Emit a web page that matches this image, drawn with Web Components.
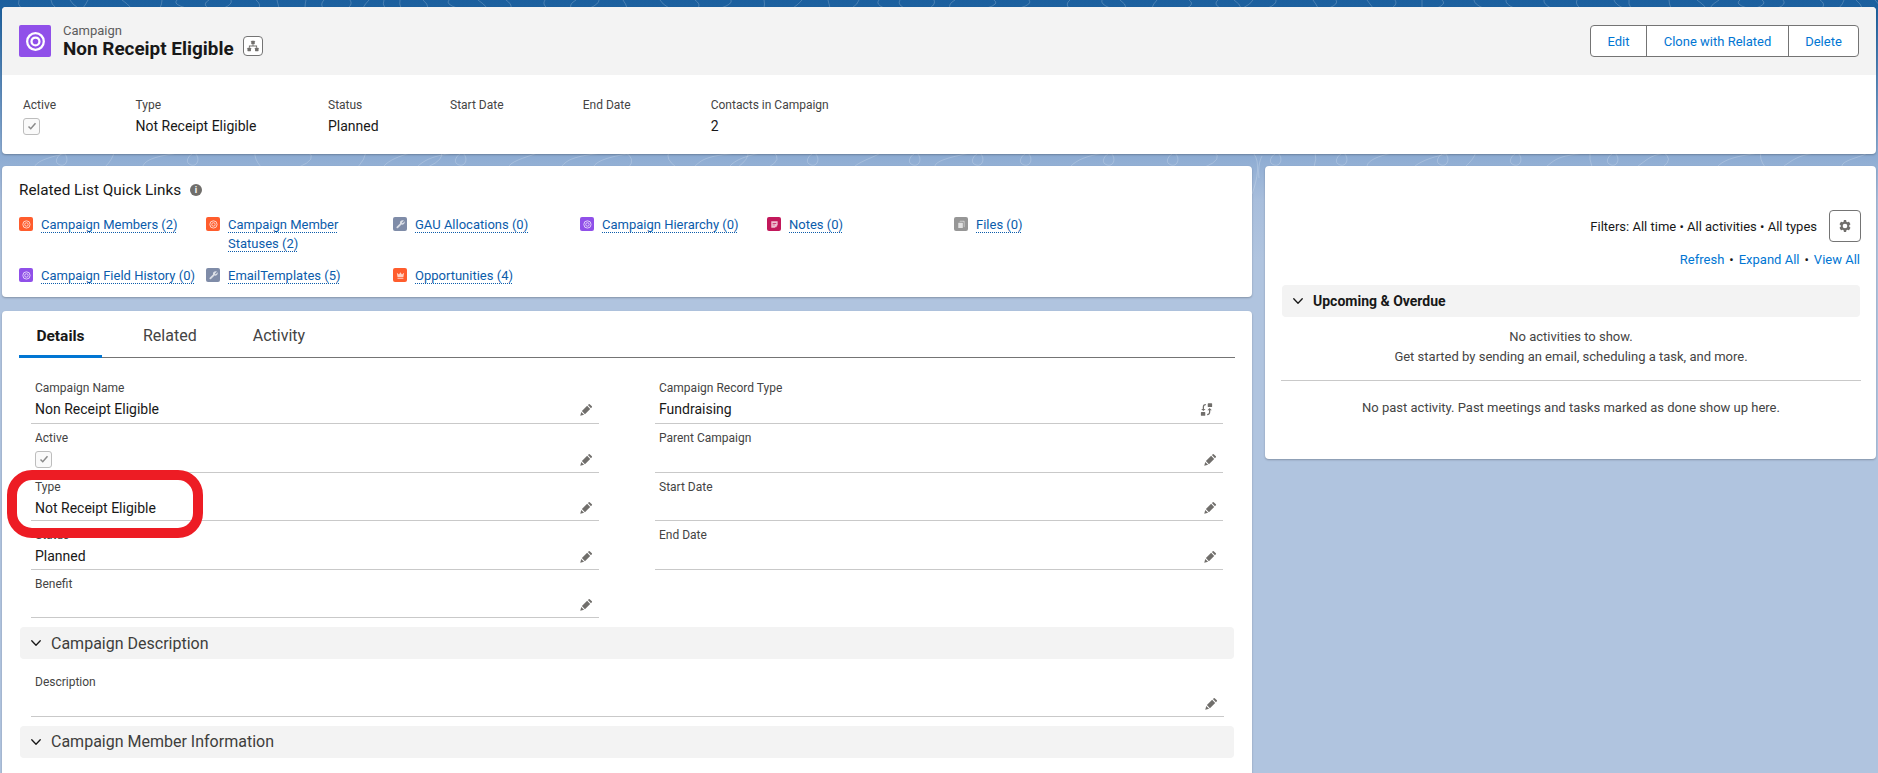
<!DOCTYPE html>
<html>
<head>
<meta charset="utf-8">
<title>Non Receipt Eligible</title>
<style>
html,body{margin:0;padding:0;height:100%;overflow:hidden;}
body{background:#b0c4df;font-family:Roboto,"Noto Sans",sans-serif;font-size:13px;color:#181818;}
</style>
</head>
<body>
<sf-page>
  <sf-highlights slot="top"></sf-highlights>
  <sf-quick-links slot="left"></sf-quick-links>
  <sf-details slot="left"></sf-details>
  <sf-activity slot="right"></sf-activity>
</sf-page>

<script>
// small glyph set, all on a 0 0 24 24 box
const ICONS = {
  pencil: '<path d="M20.6 6.9 17.1 3.4a1 1 0 0 0-1.4 0l-1.5 1.5 4.9 4.9 1.5-1.5a1 1 0 0 0 0-1.4zM13 6.1 4.6 14.5l4.9 4.9 8.4-8.4zM3.6 15.900 2 22l6.100-1.600z"/>',
  change: '<rect x="14" y="2" width="7" height="6" rx="1"/><rect x="3" y="16" width="7" height="6" rx="1"/><path d="M11 3c-3.500 0-5 2-5 5v3H3.500L7 14.500 10.500 11H8V8c0-2 1-3 3-3zM13 21c3.500 0 5-2 5-5v-3h2.500L17 9.500 13.500 13H16v3c0 2-1 3-3 3z"/>',
  chevron: '<path d="M3.500 7.500 12 16.500l8.500-9" fill="none" stroke="currentColor" stroke-width="2.600" stroke-linecap="round" stroke-linejoin="round"/>',
  check: '<path d="M5 13l4.500 4.500L19 6.500" fill="none" stroke="currentColor" stroke-width="3"/>',
  gear: '<path fill-rule="evenodd" d="M21 14.500l-1.700-1.400a7.600 7.600 0 0 0 0-2.200L21 9.500c.3-.2.4-.6.200-.9l-2-3.400c-.2-.3-.5-.4-.8-.3l-2.100.8c-.6-.4-1.200-.8-1.900-1.100l-.3-2.100c0-.3-.4-.6-.7-.6H10.600c-.3 0-.7.300-.7.600l-.3 2.100c-.7.300-1.300.7-1.900 1.100l-2.100-.8c-.3-.1-.6 0-.8.300l-2 3.400c-.2.300-.1.700.2.900l1.700 1.400a7.600 7.600 0 0 0 0 2.200L3 14.500c-.3.200-.4.600-.2.900l2 3.400c.2.300.5.400.8.300l2.100-.8c.6.400 1.200.8 1.900 1.100l.3 2.100c0 .3.400.6.700.6h2.800c.3 0 .7-.3.700-.6l.3-2.100c.7-.3 1.300-.7 1.900-1.100l2.100.8c.3.100.6 0 .8-.3l2-3.400c.2-.3.1-.7-.2-.9zM12 16a4 4 0 1 1 0-8 4 4 0 0 1 0 8z"/>',
  hierarchy: '<rect x="9" y="3" width="6" height="6" rx=".8"/><rect x="2.500" y="15" width="6" height="6" rx=".8"/><rect x="15.500" y="15" width="6" height="6" rx=".8"/><path d="M11.200 9h1.600v2.200h6.200V15h-1.600v-2.200H6.600V15H5v-3.800h6.200z"/>',
  target: '<g fill="none" stroke="currentColor"><circle cx="12" cy="12" r="8" stroke-width="2.200"/><circle cx="12" cy="12" r="3.800" stroke-width="2.200"/></g>',
  wrench: '<path d="M19.600 3.800 16 7.300l-.6 1.300 1 1 1.300-.6 3.500-3.500c.6 2.300 0 4.600-1.700 6-1.500 1.300-3.400 1.600-5.100 1L6.600 20.400c-.8.800-2.100.8-2.900 0s-.8-2.100 0-2.900l7.300-7.200c-.6-1.800-.2-3.800 1.200-5.300 1.800-1.600 4.200-2.100 7.400-1.200z" transform="translate(0 -.4)"/>',
  crown: '<path d="M12 5l3.300 5 4.700-4-1.500 9.500h-13L4 6l4.700 4zM5.500 17h13v2.500h-13z"/>',
  note: '<path fill-rule="evenodd" d="M5 5h14v8l-6 6H5zm3 4v1.600h8V9zm0 3.400V14h5v-1.600z"/><path d="M15 15h4l-4 4z" opacity=".6"/>',
  file: '<path d="M9 4h9a1 1 0 0 1 1 1v12a1 1 0 0 1-1 1h-1V8a2 2 0 0 0-2-2H8V5a1 1 0 0 1 1-1z" opacity=".7"/><path d="M6 8h8a1 1 0 0 1 1 1v10a1 1 0 0 1-1 1H6a1 1 0 0 1-1-1V9a1 1 0 0 1 1-1z"/>'
};

const iconTemplate = document.createElement("template");
iconTemplate.innerHTML = `<style>
:host{display:inline-flex;align-items:center;justify-content:center;flex:none;width:var(--size,14px);height:var(--size,14px);color:var(--fg,#706e6b);}
svg{display:block;width:100%;height:100%;fill:currentColor;}
</style><svg viewBox="0 0 24 24" aria-hidden="true"></svg>`;
class SfIcon extends HTMLElement {
  constructor() {
    super();
    this.$root = this.attachShadow({ mode: "open" });
    this.$root.appendChild(iconTemplate.content.cloneNode(true));
  }
  static get observedAttributes() {
    return ["name"];
  }
  attributeChangedCallback() {
    this.$root.querySelector("svg").innerHTML = ICONS[this.getAttribute("name")] || "";
  }
}
customElements.define("sf-icon", SfIcon);

// tinted rounded square with a glyph inside
const tileTemplate = document.createElement("template");
tileTemplate.innerHTML = `<style>
:host{display:inline-flex;align-items:center;justify-content:center;flex:none;width:var(--tile,14px);height:var(--tile,14px);border-radius:2px;--fg:#fff;}
sf-icon{--size:calc(var(--tile,14px) * .78);opacity:var(--glyph,.72);}
</style><sf-icon></sf-icon>`;
class SfTile extends HTMLElement {
  constructor() {
    super();
    this.$root = this.attachShadow({ mode: "open" });
    this.$root.appendChild(tileTemplate.content.cloneNode(true));
  }
  connectedCallback() {
    this.style.background = this.getAttribute("color");
    this.$root.querySelector("sf-icon").setAttribute("name", this.getAttribute("name"));
  }
}
customElements.define("sf-tile", SfTile);

const checkTemplate = document.createElement("template");
checkTemplate.innerHTML = `<style>
:host{display:inline-flex;align-items:center;justify-content:center;box-sizing:border-box;width:17px;height:17px;border:1px solid #bdbdbd;border-radius:3px;background:#fafafa;--fg:#8a8a8a;--size:12px;}
</style><sf-icon name="check"></sf-icon>`;
class SfCheck extends HTMLElement {
  constructor() {
    super();
    this.attachShadow({ mode: "open" }).appendChild(checkTemplate.content.cloneNode(true));
  }
}
customElements.define("sf-check", SfCheck);

const pageTemplate = document.createElement("template");
pageTemplate.innerHTML = `<style>
:host{display:block;position:relative;height:773px;overflow:hidden;box-sizing:border-box;padding:7px 2px 0;background:linear-gradient(#1b5f9e 0,#1d619f 8px,#8cabd2 154px,#a8bedc 200px,#b0c4df 260px);}
.topo{position:absolute;left:0;top:0;width:100%;height:300px;fill:none;stroke:#fff;stroke-opacity:.2;stroke-width:1;}
.wrap{position:relative;display:grid;gap:12px;}
.cols{display:grid;grid-template-columns:1249px 611px;column-gap:14px;align-items:start;}
.col{display:grid;gap:14px;}
.mark{position:absolute;left:7px;top:470px;width:196px;height:68px;box-sizing:border-box;border:10px solid #ed1c24;border-radius:25px;}
</style>
<svg class="topo" viewBox="0 0 1878 300" aria-hidden="true"></svg>
<div class="wrap">
  <slot name="top"></slot>
  <div class="cols">
    <div class="col"><slot name="left"></slot></div>
    <div class="col"><slot name="right"></slot></div>
  </div>
</div>
<div class="mark"></div>`;
class SfPage extends HTMLElement {
  constructor() {
    super();
    this.$root = this.attachShadow({ mode: "open" });
    this.$root.appendChild(pageTemplate.content.cloneNode(true));
    // contour lines of the backdrop, they only show in the two gaps
    let d = "";
    let seed = 7;
    const rnd = (n) => {
      seed = (seed * 31 + 11) % 1009;
      return seed % n;
    };
    for (let x = -20; x < 1900; x += 12 + rnd(30)) {
      d += `M${x} 0q${rnd(14) - 7} 4 ${rnd(20) - 10} 8`;
    }
    for (let x = -20; x < 1900; x += 18 + rnd(50)) {
      const kind = rnd(3);
      if (kind === 0) d += `M${x} 152q${rnd(16) - 4} 7 ${rnd(22) - 14} 15`;
      else if (kind === 1) d += `M${x} 166c${rnd(10)} -6 ${10 + rnd(14)} -10 ${24 + rnd(20)} -13`;
      else d += `M${x} 153c-6 4 -8 10 -2 12s10 -6 4 -12`;
    }
    d += "M1254 154c6 8 4 24 -2 40M1262 156c-3 6 -4 14 -3 22";
    this.$root.querySelector(".topo").innerHTML = `<path d="${d}"/>`;
  }
}
customElements.define("sf-page", SfPage);

const cardCss = `:host{display:block;background:#fff;border-radius:4px;box-shadow:0 1px 2px rgba(0,0,0,.25);}`;

const highlightsTemplate = document.createElement("template");
highlightsTemplate.innerHTML = `<style>
${cardCss}
:host{height:147px;overflow:hidden;}
.head{display:flex;align-items:center;height:68px;box-sizing:border-box;padding:0 17px;background:#f3f3f3;}
sf-tile{--tile:32px;--glyph:1;margin-right:12px;}
.names{margin-top:-2px;}
.entity{font-size:13px;color:#5c5c5c;line-height:17px;}
.title{font-size:18.900px;font-weight:700;line-height:20px;}
.hier{display:inline-flex;align-items:center;justify-content:center;box-sizing:border-box;width:20px;height:20px;margin:10px 0 0 9px;border:1px solid #747474;border-radius:4px;background:#fff;--fg:#706e6b;--size:14px;}
.actions{margin-left:auto;display:flex;height:32px;box-sizing:border-box;border:1px solid #747474;border-radius:4px;background:#fff;}
.actions span{display:flex;align-items:center;justify-content:center;color:#0176d3;border-left:1px solid #747474;box-sizing:border-box;}
.actions span:first-child{border-left:0;}
.facts{display:flex;padding:21px 0 0 21px;}
.fact{flex:none;}
.fact b{display:block;font-weight:400;font-size:12px;line-height:18px;color:#444;}
.fact div{display:flex;align-items:center;height:22px;margin-top:1px;font-size:14px;}
</style>
<div class="head">
  <sf-tile name="target" color="#9050e9"></sf-tile>
  <div class="names">
    <div class="entity">Campaign</div>
    <div class="title">Non Receipt Eligible</div>
  </div>
  <span class="hier"><sf-icon name="hierarchy"></sf-icon></span>
  <div class="actions">
    <span style="width:55px">Edit</span>
    <span style="width:142px">Clone with Related</span>
    <span style="width:70px">Delete</span>
  </div>
</div>
<div class="facts">
  <div class="fact" style="width:112.500px"><b>Active</b><div><sf-check></sf-check></div></div>
  <div class="fact" style="width:192.500px"><b>Type</b><div>Not Receipt Eligible</div></div>
  <div class="fact" style="width:122px"><b>Status</b><div>Planned</div></div>
  <div class="fact" style="width:132.700px"><b>Start Date</b><div></div></div>
  <div class="fact" style="width:128px"><b>End Date</b><div></div></div>
  <div class="fact"><b>Contacts in Campaign</b><div>2</div></div>
</div>`;
class SfHighlights extends HTMLElement {
  constructor() {
    super();
    this.attachShadow({ mode: "open" }).appendChild(highlightsTemplate.content.cloneNode(true));
  }
}
customElements.define("sf-highlights", SfHighlights);

const LINKS = [
  ["target", "#ff5d2d", "Campaign Members (2)"],
  ["target", "#ff5d2d", "Campaign Member Statuses (2)"],
  ["wrench", "#7f8ca8", "GAU Allocations (0)"],
  ["target", "#9050e9", "Campaign Hierarchy (0)"],
  ["note", "#c2185b", "Notes (0)"],
  ["file", "#969696", "Files (0)"],
  ["target", "#9050e9", "Campaign Field History (0)"],
  ["wrench", "#7f8ca8", "EmailTemplates (5)"],
  ["crown", "#ff5d2d", "Opportunities (4)"]
];

const quickTemplate = document.createElement("template");
quickTemplate.innerHTML = `<style>
${cardCss}
:host{height:131px;box-sizing:border-box;padding:14px 17px 0;}
h2{display:flex;align-items:center;margin:0;font-weight:400;font-size:15.300px;line-height:20px;color:#181818;}
.info{display:inline-flex;align-items:center;justify-content:center;width:12px;height:12px;margin-left:9px;border-radius:50%;background:#706e6b;color:#fff;font-size:9px;font-weight:700;line-height:12px;}
.grid{display:grid;grid-template-columns:repeat(6,187px);grid-auto-rows:min-content;row-gap:13px;margin-top:15px;}
.link{display:flex;align-items:flex-start;padding-right:6px;}
sf-tile{margin:2px 8px 0 0;}
a{font-size:13px;line-height:19px;color:#0b5cab;text-decoration:underline dotted #0b5cab;text-underline-offset:3px;text-decoration-thickness:1px;}
</style>
<h2>Related List Quick Links<span class="info">i</span></h2>
<div class="grid"></div>`;
class SfQuickLinks extends HTMLElement {
  constructor() {
    super();
    this.$root = this.attachShadow({ mode: "open" });
    this.$root.appendChild(quickTemplate.content.cloneNode(true));
    const grid = this.$root.querySelector(".grid");
    LINKS.forEach(([name, color, text]) => {
      const el = document.createElement("div");
      el.className = "link";
      el.innerHTML = `<sf-tile name="${name}" color="${color}"></sf-tile><a>${text}</a>`;
      grid.appendChild(el);
    });
  }
}
customElements.define("sf-quick-links", SfQuickLinks);

const fieldTemplate = document.createElement("template");
fieldTemplate.innerHTML = `<style>
:host{display:block;height:48.500px;box-sizing:border-box;border-bottom:1px solid #c9c9c9;padding:5px 4px 0;}
label{display:block;font-size:12px;line-height:18px;color:#444;}
.val{display:flex;align-items:center;height:22px;margin-top:1px;font-size:14px;}
.edit{margin-left:auto;margin-right:1px;--size:15px;--fg:#706e6b;}
.text{flex:1;min-width:0;display:flex;align-items:center;}
</style>
<label></label>
<div class="val"><span class="text"><slot></slot></span><sf-icon class="edit" name="pencil"></sf-icon></div>`;
class SfField extends HTMLElement {
  constructor() {
    super();
    this.$root = this.attachShadow({ mode: "open" });
    this.$root.appendChild(fieldTemplate.content.cloneNode(true));
  }
  connectedCallback() {
    this.$root.querySelector("label").textContent = this.getAttribute("label");
    if (this.hasAttribute("icon")) {
      const ic = this.$root.querySelector(".edit");
      ic.setAttribute("name", this.getAttribute("icon"));
      ic.style.marginRight = "5px";
    }
  }
}
customElements.define("sf-field", SfField);

const sectionTemplate = document.createElement("template");
sectionTemplate.innerHTML = `<style>
:host{display:flex;align-items:center;height:32px;box-sizing:border-box;padding-left:10px;border-radius:4px;background:#f3f3f3;font-size:var(--head-size,16px);font-weight:var(--head-weight,400);color:var(--head-color,#3e3e3c);--size:12px;--fg:#181818;}
sf-icon{margin-right:var(--head-gap,9px);}
</style><sf-icon name="chevron"></sf-icon><slot></slot>`;
class SfSection extends HTMLElement {
  constructor() {
    super();
    this.attachShadow({ mode: "open" }).appendChild(sectionTemplate.content.cloneNode(true));
  }
}
customElements.define("sf-section", SfSection);

const detailsTemplate = document.createElement("template");
detailsTemplate.innerHTML = `<style>
${cardCss}
:host{height:480px;box-sizing:border-box;padding:11px 17px 0 17px;}
.tabs{display:flex;height:35px;width:1215.500px;border-bottom:1px solid #747474;font-size:16px;color:#444;}
.tabs span{display:block;box-sizing:border-box;height:36px;line-height:28px;}
.tabs .on{width:83px;text-align:center;font-weight:700;font-size:15.500px;color:#181818;border-bottom:3px solid #0176d3;}
.grid{display:grid;grid-template-columns:568px 568px;column-gap:56px;margin:16px 0 0 12px;}
.col{display:flex;flex-direction:column;}
.col sf-field:first-child{height:50px;}
.wide{margin:0 11px 0 12px;}
sf-section{width:1214px;margin-top:9px;margin-left:1px;}
sf-field.desc{margin-top:9px;}
</style>
<div class="tabs">
  <span class="on">Details</span>
  <span style="margin-left:41px">Related</span>
  <span style="margin-left:56px">Activity</span>
</div>
<div class="grid">
  <div class="col">
    <sf-field label="Campaign Name">Non Receipt Eligible</sf-field>
    <sf-field label="Active"><sf-check></sf-check></sf-field>
    <sf-field label="Type">Not Receipt Eligible</sf-field>
    <sf-field label="Status">Planned</sf-field>
    <sf-field label="Benefit"></sf-field>
  </div>
  <div class="col">
    <sf-field label="Campaign Record Type" icon="change">Fundraising</sf-field>
    <sf-field label="Parent Campaign"></sf-field>
    <sf-field label="Start Date"></sf-field>
    <sf-field label="End Date"></sf-field>
  </div>
</div>
<sf-section>Campaign Description</sf-section>
<div class="wide"><sf-field class="desc" label="Description"></sf-field></div>
<sf-section>Campaign Member Information</sf-section>`;
class SfDetails extends HTMLElement {
  constructor() {
    super();
    this.attachShadow({ mode: "open" }).appendChild(detailsTemplate.content.cloneNode(true));
  }
}
customElements.define("sf-details", SfDetails);

const activityTemplate = document.createElement("template");
activityTemplate.innerHTML = `<style>
${cardCss}
:host{height:293px;box-sizing:border-box;padding:44px 16px 0 17px;}
.filters{display:flex;align-items:center;justify-content:flex-end;height:32px;font-size:13px;color:#181818;}
.gear{display:inline-flex;align-items:center;justify-content:center;box-sizing:border-box;width:32px;height:32px;margin-left:12px;margin-right:-1px;border:1px solid #747474;border-radius:4px;--size:14px;--fg:#706e6b;}
.links{display:flex;justify-content:flex-end;gap:5px;margin-top:8px;line-height:20px;font-size:13px;color:#181818;}
.links a{color:#0176d3;}
sf-section{--head-size:14px;--head-weight:700;--head-gap:9px;--head-color:#181818;margin-top:15px;}
.msg{text-align:center;font-size:13px;color:#444;line-height:20px;}
.msg.up{margin-top:10px;padding-bottom:13px;border-bottom:1px solid #c9c9c9;margin-left:-1px;margin-right:-1px;}
.msg.past{margin-top:17px;}
</style>
<div class="filters">Filters: All time • All activities • All types<span class="gear"><sf-icon name="gear"></sf-icon></span></div>
<div class="links"><a>Refresh</a>•<a>Expand All</a>•<a>View All</a></div>
<sf-section>Upcoming &amp; Overdue</sf-section>
<div class="msg up">No activities to show.<br>Get started by sending an email, scheduling a task, and more.</div>
<div class="msg past">No past activity. Past meetings and tasks marked as done show up here.</div>`;
class SfActivity extends HTMLElement {
  constructor() {
    super();
    this.attachShadow({ mode: "open" }).appendChild(activityTemplate.content.cloneNode(true));
  }
}
customElements.define("sf-activity", SfActivity);
</script>
</body>
</html>
